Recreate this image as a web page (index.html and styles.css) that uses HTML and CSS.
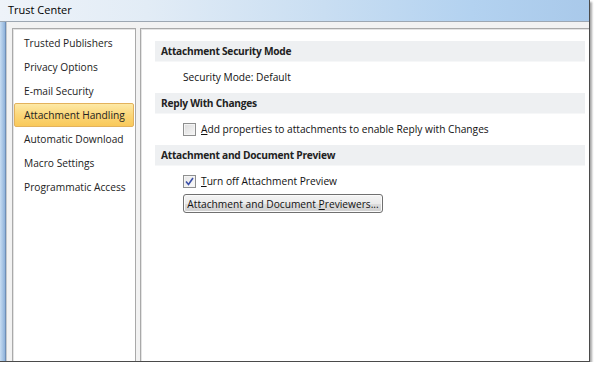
FILE: index.html
```html
<!DOCTYPE html>
<html lang="en">
<head>
    <meta charset="UTF-8">
    <title>Trust Center</title>
    <link rel="stylesheet" href="styles.css">
</head>
<body>
    <div class="window">
        <div class="titlebar">Trust Center</div>
        <div class="frame">
            <div class="frame-edge"></div>
            <div class="client">
                <ul class="nav">
                    <li>Trusted Publishers</li>
                    <li>Privacy Options</li>
                    <li>E-mail Security</li>
                    <li class="selected">Attachment Handling</li>
                    <li>Automatic Download</li>
                    <li>Macro Settings</li>
                    <li>Programmatic Access</li>
                </ul>

                <div class="main">
                    <div class="section-title">Attachment Security Mode</div>
                    <div class="section-body">
                        <div class="row">Security Mode: Default</div>
                    </div>

                    <div class="section-title">Reply With Changes</div>
                    <div class="section-body">
                        <div class="row">
                            <span class="checkbox"></span>
                            <span><u>A</u>dd properties to attachments to enable Reply with Changes</span>
                        </div>
                    </div>

                    <div class="section-title">Attachment and Document Preview</div>
                    <div class="section-body">
                        <div class="row">
                            <span class="checkbox checked">
                                <svg width="9" height="9" viewBox="0 0 9 9"><path d="M1 4.5 L3.5 7.5 L8 1" fill="none" stroke="#3a4fa8" stroke-width="1.6"/></svg>
                            </span>
                            <span><u>T</u>urn off Attachment Preview</span>
                        </div>
                        <button class="btn">Attachment and Document <u>P</u>reviewers...</button>
                    </div>
                </div>
            </div>
        </div>
    </div>
</body>
</html>
```

FILE: styles.css
```css
body {
    margin: 0;
    background: #fff;
    font-family: "Open Sans", "Noto Sans", sans-serif;
    font-size: 10.2px;
    color: #111;
}
.window {
    width: 589px;
    height: 361px;
    display: flex;
    flex-direction: column;
    border-right: 1px solid #4a4a4a;
    border-bottom: 1px solid #4a4a4a;
    box-shadow: 2px 2px 2px rgba(0, 0, 0, 0.35);
}
.titlebar {
    height: 21px;
    line-height: 19px;
    padding-left: 8px;
    font-size: 11px;
    color: #000;
    background: linear-gradient(90deg, #eef3f9 0%, #e2ecf6 25%, #c9def2 55%, #b3d2f0 80%, #a9c9ea 100%);
    border-bottom: 1px solid #9da7b2;
}
.frame {
    flex: 1;
    display: flex;
}
.frame-edge {
    width: 5px;
    background: linear-gradient(90deg, #c6dcf2, #8fb2da);
    border-right: 1px solid #6e8fb8;
}
.client {
    flex: 1;
    display: flex;
    gap: 4px;
    padding: 6px 0 0 5px;
    background: #f2f2f2;
    border-left: 1px solid #c4c8cc;
}
.nav {
    list-style: none;
    margin: 0;
    padding: 2px 1px 0;
    width: 120px;
    background: #fff;
    border: 1px solid #a9a9a9;
    border-bottom: none;
    box-shadow: inset 1px 1px 0 #e4e4e4;
}
.nav li {
    height: 24px;
    line-height: 24px;
    padding-left: 10px;
    color: #222;
    white-space: nowrap;
}
.nav li.selected {
    height: 22px;
    line-height: 22px;
    padding-left: 9px;
    border: 1px solid #e3b25c;
    border-radius: 2px;
    background: linear-gradient(#fde9a6, #fbd679 50%, #f9c95a);
}
.main {
    flex: 1;
    padding: 12px 4px 0 14px;
    background: #fff;
    border-left: 1px solid #a9a9a9;
    border-top: 1px solid #a9a9a9;
    box-shadow: inset 1px 1px 0 #e4e4e4;
}
.section-title {
    height: 20px;
    line-height: 20px;
    padding-left: 6px;
    font-weight: bold;
    letter-spacing: -0.25px;
    color: #222;
    background: #eef0f2;
    border-bottom: 1px solid #f6f7f8;
}
.section-body {
    padding: 6px 0 7px 28px;
}
.row {
    height: 18px;
    display: flex;
    align-items: center;
    gap: 5px;
    white-space: nowrap;
}
.row u {
    text-decoration-thickness: 1px;
}
.checkbox {
    width: 11px;
    height: 11px;
    border: 1px solid #8e8f8f;
    background: linear-gradient(135deg, #dcdcdc, #f6f6f6);
    box-shadow: inset 0 0 0 1px #f4f4f4;
    display: flex;
    align-items: center;
    justify-content: center;
}
.checkbox.checked {
    background: linear-gradient(135deg, #e6e6e6, #fbfbfb);
}
.btn {
    margin-top: 4px;
    width: 200px;
    height: 19px;
    padding: 0;
    font-family: inherit;
    font-size: 10.2px;
    color: #111;
    white-space: nowrap;
    border: 1px solid #707070;
    border-radius: 3px;
    background: linear-gradient(#f4f4f4, #ebebeb 50%, #dddddd 51%, #cfcfcf);
    box-shadow: inset 0 0 0 1px #fbfbfb;
}
```
